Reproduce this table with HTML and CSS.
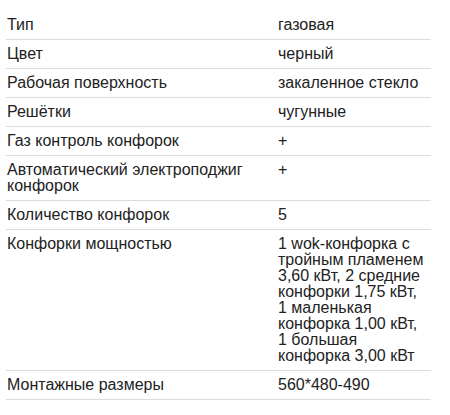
FILE: index.html
```html
<!DOCTYPE html>
<html lang="ru">
<head>
<meta charset="utf-8">
<link rel="stylesheet" href="styles.css">
</head>
<body>
<div class="specs">
  <div class="row"><div class="name">Тип</div><div class="val">газовая</div></div>
  <div class="row"><div class="name">Цвет</div><div class="val">черный</div></div>
  <div class="row"><div class="name">Рабочая поверхность</div><div class="val">закаленное стекло</div></div>
  <div class="row"><div class="name">Решётки</div><div class="val">чугунные</div></div>
  <div class="row"><div class="name">Газ контроль конфорок</div><div class="val">+</div></div>
  <div class="row"><div class="name">Автоматический электроподжиг конфорок</div><div class="val">+</div></div>
  <div class="row"><div class="name">Количество конфорок</div><div class="val">5</div></div>
  <div class="row"><div class="name">Конфорки мощностью</div><div class="val">1 wok-конфорка с тройным пламенем 3,60 кВт, 2 средние конфорки 1,75 кВт, 1 маленькая конфорка 1,00 кВт, 1 большая конфорка 3,00 кВт</div></div>
  <div class="row"><div class="name">Монтажные размеры</div><div class="val">560*480-490</div></div>
</div>
</body>
</html>
```

FILE: styles.css
```css
html, body {
  margin: 0;
  padding: 0;
  background: #fff;
}
body {
  font-family: "Liberation Sans", Arial, sans-serif;
  font-size: 16px;
  line-height: 16px;
  color: #222;
}
.specs {
  width: 425px;
  margin: 11px 0 0 6px;
}
.row {
  display: grid;
  grid-template-columns: 272px 153px;
  border-bottom: 1px solid #dcdcdc;
}
.name {
  padding: 6px 0 6px 1px;
}
.val {
  padding: 6px 4px 6px 0;
}
```
